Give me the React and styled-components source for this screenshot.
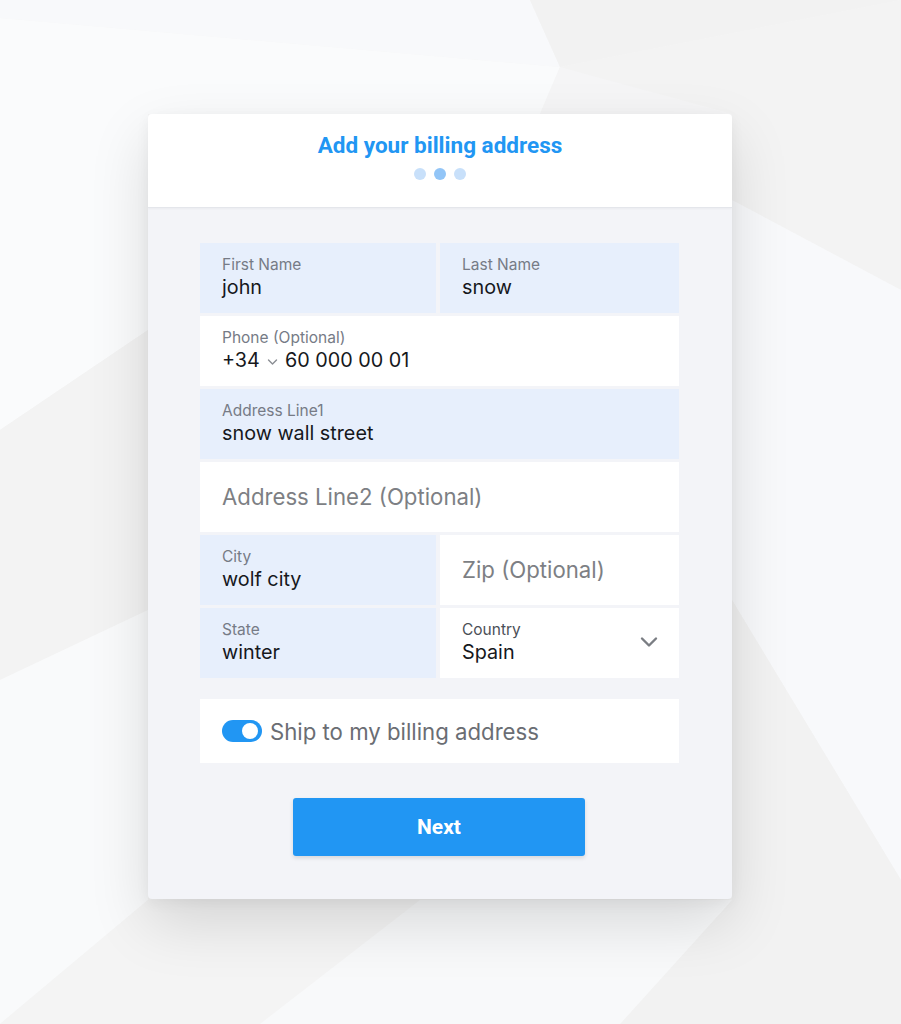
import React from "react";
import styled, { createGlobalStyle } from "styled-components";

const Global = createGlobalStyle`
  html, body { margin: 0; padding: 0; }
  body { background: #f5f5f5; font-family: Inter, "Noto Sans", sans-serif; }
  * { box-sizing: border-box; }
`;

const Page = styled.div`
  position: relative;
  min-height: 1024px;
  padding: 114px 0 0 148px;
  overflow: hidden;
`;

const Backdrop = styled.svg`
  position: absolute;
  inset: 0;
  width: 100%;
  height: 100%;
  z-index: 0;
`;

const Card = styled.div`
  position: relative;
  z-index: 1;
  width: 584px;
  height: 785px;
  border-radius: 4px;
  background: #f3f4f8;
  box-shadow: 0 24px 60px rgba(0, 0, 0, 0.13), 0 4px 14px rgba(0, 0, 0, 0.05);
  display: flex;
  flex-direction: column;
  align-items: flex-start;
  padding-left: 52px;
  overflow: hidden;
`;

const Header = styled.div`
  width: 584px;
  margin-left: -52px;
  height: 94px;
  background: #fff;
  border-bottom: 1px solid #e4e6eb;
  box-shadow: 0 1px 2px rgba(0, 0, 0, 0.04);
  display: flex;
  flex-direction: column;
  align-items: center;
  padding-top: 18px;
`;

const Title = styled.h1`
  margin: 0;
  font-family: Roboto, "Liberation Sans", sans-serif;
  font-weight: 700;
  font-size: 22.5px;
  line-height: 26px;
  color: #2196f3;
`;

const Dots = styled.div`
  display: flex;
  gap: 8px;
  margin-top: 10px;
`;

const Dot = styled.span`
  width: 12px;
  height: 12px;
  border-radius: 50%;
  background: ${(p) => (p.$active ? "#92c5f7" : "#c8e0fa")};
`;

const Form = styled.div`
  width: 479px;
  margin-top: 35px;
  display: grid;
  grid-template-columns: 236px 239px;
  grid-auto-rows: 70px;
  column-gap: 4px;
  row-gap: 3px;
`;

const Cell = styled.div`
  grid-column: ${(p) => (p.$full ? "1 / -1" : "auto")};
  background: ${(p) => (p.$filled ? "#e7effc" : "#ffffff")};
  padding: 0 22px 1px;
  display: flex;
  flex-direction: column;
  justify-content: center;
  position: relative;
`;

const Label = styled.div`
  font-size: 15.5px;
  line-height: 19px;
  color: ${(p) => (p.$dark ? "#4b4f57" : "#767b86")};
`;

const Value = styled.div`
  font-size: 19.8px;
  line-height: 27px;
  color: #16181c;
  display: flex;
  align-items: center;
`;

const Placeholder = styled.div`
  font-size: 22.2px;
  line-height: 28px;
  color: #7d7f84;
`;

const SmallChevron = styled.svg`
  width: 11px;
  height: 8px;
  margin: 3px 7px 0 7px;
`;

const SelectChevron = styled.svg`
  position: absolute;
  right: 21px;
  top: 28px;
  width: 18px;
  height: 12px;
`;

const ToggleRow = styled.div`
  width: 479px;
  height: 64px;
  margin-top: 21px;
  background: #fff;
  padding: 0 22px;
  display: flex;
  align-items: center;
  gap: 8px;
`;

const Switch = styled.div`
  width: 40px;
  height: 22px;
  border-radius: 11px;
  background: #2196f3;
  display: flex;
  align-items: center;
  justify-content: flex-end;
  padding-right: 4px;
`;

const Knob = styled.span`
  width: 16px;
  height: 16px;
  border-radius: 50%;
  background: #fff;
`;

const ToggleText = styled.span`
  font-size: 22.2px;
  color: #6a6d73;
  margin-top: 1px;
`;

const Button = styled.button`
  width: 292px;
  height: 58px;
  margin: 35px 0 0 93px;
  border: none;
  border-radius: 3px;
  background: #2196f3;
  color: #fff;
  font-family: Roboto, "Liberation Sans", sans-serif;
  font-weight: 700;
  font-size: 21px;
  box-shadow: 0 2px 4px rgba(0, 0, 0, 0.12);
  cursor: pointer;
`;

const polys = [
  ["0,0 530,0 560,67 0,18", "#f8f9fb"],
  ["530,0 901,0 560,67", "#f2f2f2"],
  ["560,67 901,0 901,290 732,200", "#f3f3f3"],
  ["0,18 560,67 540,114 148,114 148,330 0,430", "#fafbfc"],
  ["560,67 732,114 732,200 540,114", "#f5f5f6"],
  ["732,200 901,290 901,880 732,600", "#f8f9fb"],
  ["732,600 901,880 901,1024 620,1024 732,900", "#f2f2f2"],
  ["0,430 148,330 148,610 0,680", "#f3f3f3"],
  ["0,680 148,610 148,900 0,1024", "#f9fafb"],
  ["148,900 420,900 260,1024 0,1024", "#f4f4f4"],
  ["420,900 732,900 620,1024 260,1024", "#f8f9fa"],
];

export default function App() {
  return (
    <>
      <Global />
      <Page>
        <Backdrop viewBox="0 0 901 1024" preserveAspectRatio="none">
          <rect width="901" height="1024" fill="#f5f5f5" />
          {polys.map(([pts, fill], i) => (
            <polygon key={i} points={pts} fill={fill} />
          ))}
        </Backdrop>
        <Card>
          <Header>
            <Title>Add your billing address</Title>
            <Dots>
              <Dot />
              <Dot $active />
              <Dot />
            </Dots>
          </Header>
          <Form>
            <Cell $filled>
              <Label>First Name</Label>
              <Value>john</Value>
            </Cell>
            <Cell $filled>
              <Label>Last Name</Label>
              <Value>snow</Value>
            </Cell>
            <Cell $full>
              <Label>Phone (Optional)</Label>
              <Value>
                +34
                <SmallChevron viewBox="0 0 11 8">
                  <path d="M1.5 2 L5.5 6 L9.5 2" fill="none" stroke="#8a8d93" strokeWidth="1.4" strokeLinecap="round" strokeLinejoin="round" />
                </SmallChevron>
                60 000 00 01
              </Value>
            </Cell>
            <Cell $full $filled>
              <Label>Address Line1</Label>
              <Value>snow wall street</Value>
            </Cell>
            <Cell $full>
              <Placeholder>Address Line2 (Optional)</Placeholder>
            </Cell>
            <Cell $filled>
              <Label>City</Label>
              <Value>wolf city</Value>
            </Cell>
            <Cell>
              <Placeholder>Zip (Optional)</Placeholder>
            </Cell>
            <Cell $filled>
              <Label>State</Label>
              <Value>winter</Value>
            </Cell>
            <Cell>
              <Label $dark>Country</Label>
              <Value>Spain</Value>
              <SelectChevron viewBox="0 0 18 12">
                <path d="M2 2.5 L9 9.5 L16 2.5" fill="none" stroke="#7a7d83" strokeWidth="2.4" strokeLinecap="round" strokeLinejoin="round" />
              </SelectChevron>
            </Cell>
          </Form>
          <ToggleRow>
            <Switch>
              <Knob />
            </Switch>
            <ToggleText>Ship to my billing address</ToggleText>
          </ToggleRow>
          <Button>Next</Button>
        </Card>
      </Page>
    </>
  );
}
